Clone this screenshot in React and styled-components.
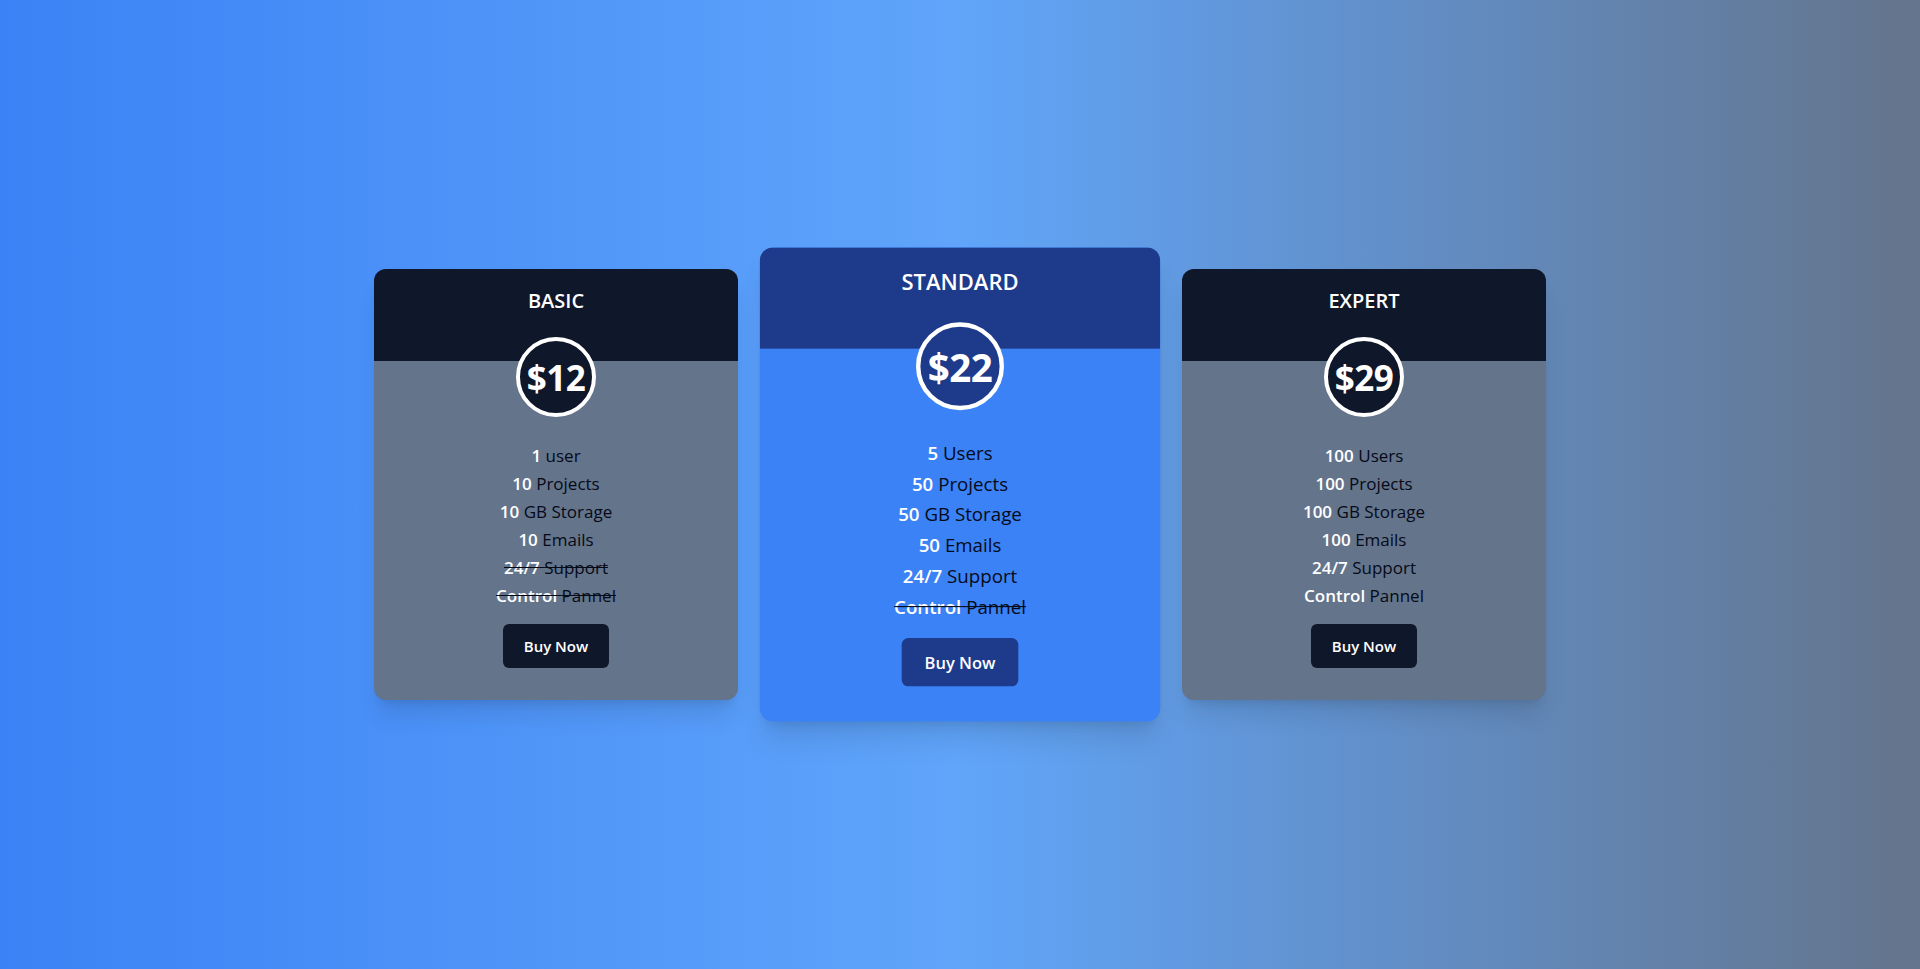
import React from 'react';
import styled, { createGlobalStyle } from 'styled-components';

const GlobalStyle = createGlobalStyle`
  * { box-sizing: border-box; }
  body {
    margin: 0;
    font-family: "Segoe UI", "Open Sans", "Noto Sans", sans-serif;
  }
`

const Page = styled.div`
  min-height: 100vh;
  display: flex;
  align-items: center;
  justify-content: center;
  gap: 40px;
  background: linear-gradient(to right, #3b82f6 0%, #60a5fa 50%, #64748b 100%);
`

const Card = styled.div`
  width: 364px;
  display: flex;
  flex-direction: column;
  align-items: center;
  padding-bottom: 32px;
  border-radius: 12px;
  overflow: hidden;
  background-color: ${p => p.$body};
  box-shadow: 0 20px 25px -5px rgba(0, 0, 0, 0.1), 0 8px 10px -6px rgba(0, 0, 0, 0.1);
  transform: ${p => (p.$featured ? 'scale(1.1)' : 'none')};
  position: relative;
  z-index: ${p => (p.$featured ? 1 : 0)};
`

const Header = styled.div`
  width: 100%;
  padding: 18px 16px 46px;
  background-color: ${p => p.$bg};
  text-align: center;
`

const Title = styled.h2`
  margin: 0;
  font-size: 20px;
  line-height: 28px;
  font-weight: 600;
  color: #fff;
  text-transform: uppercase;
`

const Price = styled.div`
  width: 80px;
  height: 80px;
  margin-top: -24px;
  border: 4px solid #fff;
  border-radius: 50%;
  background-color: ${p => p.$bg};
  display: flex;
  align-items: center;
  justify-content: center;
  color: #fff;
  font-size: 35px;
  font-weight: 700;
  letter-spacing: -0.5px;
`

const Features = styled.ul`
  list-style: none;
  margin: 25px 0 0;
  padding: 0;
  text-align: center;
`

const Feature = styled.li`
  font-size: 17px;
  line-height: 28px;
  color: #050a18;
  text-decoration: ${p => (p.$off ? 'line-through' : 'none')};
`

const Num = styled.span`
  color: #fff;
  font-weight: 600;
`

const BuyButton = styled.button`
  margin-top: 14px;
  padding: 8px 21px;
  border: none;
  border-radius: 6px;
  background-color: ${p => p.$bg};
  color: #fff;
  font-family: inherit;
  font-size: 15px;
  line-height: 28px;
  font-weight: 600;
  cursor: pointer;
`

const plans = [
  {
    name: 'Basic', price: 12, head: '#0f172a', body: '#64748b',
    features: [
      ['1', 'user'], ['10', 'Projects'], ['10', 'GB Storage'], ['10', 'Emails'],
      ['24/7', 'Support', true], ['Control', 'Pannel', true]
    ]
  },
  {
    name: 'Standard', price: 22, head: '#1e3a8a', body: '#3b82f6', featured: true,
    features: [
      ['5', 'Users'], ['50', 'Projects'], ['50', 'GB Storage'], ['50', 'Emails'],
      ['24/7', 'Support'], ['Control', 'Pannel', true]
    ]
  },
  {
    name: 'Expert', price: 29, head: '#0f172a', body: '#64748b',
    features: [
      ['100', 'Users'], ['100', 'Projects'], ['100', 'GB Storage'], ['100', 'Emails'],
      ['24/7', 'Support'], ['Control', 'Pannel']
    ]
  }
];

const App = () => {
  return (
    <>
      <GlobalStyle />
      <Page>
        {plans.map(plan => (
          <Card key={plan.name} $body={plan.body} $featured={plan.featured}>
            <Header $bg={plan.head}>
              <Title>{plan.name}</Title>
            </Header>
            <Price $bg={plan.head}>${plan.price}</Price>
            <Features>
              {plan.features.map(([num, text, off]) => (
                <Feature key={text} $off={off}>
                  <Num>{num}</Num> {text}
                </Feature>
              ))}
            </Features>
            <BuyButton $bg={plan.head}>Buy Now</BuyButton>
          </Card>
        ))}
      </Page>
    </>
  )
}

export default App;
